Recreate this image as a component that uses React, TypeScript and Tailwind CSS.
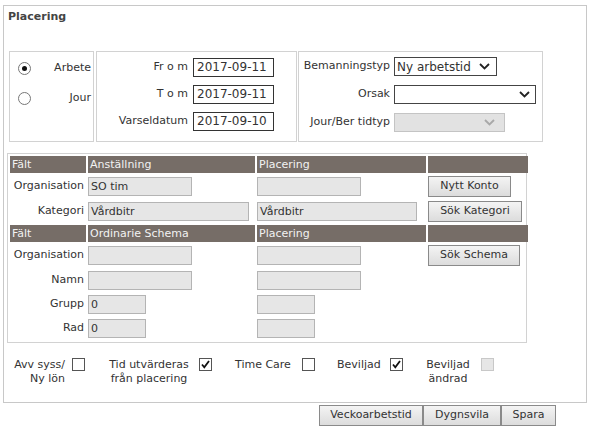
import React from "react";

const Chevron = ({ color = "#222" }: { color?: string }) => (
  <svg width="11" height="7" viewBox="0 0 11 7" fill="none">
    <path d="M1 1l4.5 4.5L10 1" stroke={color} strokeWidth="1.8" />
  </svg>
);

const Check = () => (
  <svg width="9" height="9" viewBox="0 0 9 9" fill="none">
    <path d="M1 4.5l2.3 2.8L8 1" stroke="#111" strokeWidth="1.8" />
  </svg>
);

const Radio = ({ on }: { on?: boolean }) => (
  <span className="w-[13px] h-[13px] rounded-full border border-[#777] bg-white flex items-center justify-center">
    {on && <span className="w-[5px] h-[5px] rounded-full bg-[#111]" />}
  </span>
);

const Box = ({ checked, disabled }: { checked?: boolean; disabled?: boolean }) => (
  <span
    className={
      "w-[13px] h-[13px] border flex items-center justify-center " +
      (disabled ? "border-[#c8c8c8] bg-[#e6e6e6]" : "border-[#555] bg-white")
    }
  >
    {checked && <Check />}
  </span>
);

const Field = ({ w, value = "" }: { w: string; value?: string }) => (
  <div className={"h-[19px] bg-[#e6e6e6] border border-[#b4b4b4] pl-[2px] leading-[17px] " + w}>{value}</div>
);

const DateField = ({ value }: { value: string }) => (
  <div className="w-[81px] h-[19px] border border-[#333] bg-white pl-[3px] leading-[17px] text-[12px]">{value}</div>
);

const Btn = ({ label, w }: { label: string; w: string }) => (
  <div className={"h-[21px] border border-[#8a8a8a] bg-gradient-to-b from-[#f4f4f4] to-[#dcdcdc] flex items-center justify-center " + w}>
    {label}
  </div>
);

const Header = ({ a, b }: { a: string; b: string }) => (
  <>
    <div className="h-[17px] bg-[#766d67] text-[#f2f2f2] pl-[2px] leading-[17px]">Fält</div>
    <div className="h-[17px] bg-[#766d67] text-[#f2f2f2] pl-[2px] leading-[17px]">{a}</div>
    <div className="h-[17px] bg-[#766d67] text-[#f2f2f2] pl-[2px] leading-[17px]">{b}</div>
    <div className="h-[17px] bg-[#766d67]" />
  </>
);

export default function App() {
  return (
    <div className="w-[591px] h-[435px] bg-white text-[11px] text-[#333] pt-[5px] pl-[3px]" style={{ fontFamily: '"DejaVu Sans", Verdana, sans-serif' }}>
      <div className="w-[584px] h-[398px] border border-[#c8c8c8] pl-[3px]">
        <div className="font-bold text-[#444] pt-[4px] pl-[1px] leading-[14px]">Placering</div>

        <div className="flex mt-[27px] ml-[2px]">
          <div className="w-[85px] h-[91px] border border-[#d2d2d2] flex flex-col pt-[9px] pl-[8px] pr-[2px] gap-[16px]">
            <div className="flex items-center justify-between h-[14px]">
              <Radio on />
              <span>Arbete</span>
            </div>
            <div className="flex items-center justify-between h-[14px]">
              <Radio />
              <span>Jour</span>
            </div>
          </div>
          <div className="w-[201px] h-[91px] border border-[#d2d2d2] ml-[2px] flex flex-col items-end pr-[22px] pt-[6px] gap-[8px]">
            <div className="flex items-center gap-[5px]"><span>Fr o m</span><DateField value="2017-09-11" /></div>
            <div className="flex items-center gap-[5px]"><span>T o m</span><DateField value="2017-09-11" /></div>
            <div className="flex items-center gap-[5px]"><span>Varseldatum</span><DateField value="2017-09-10" /></div>
          </div>
          <div className="w-[245px] h-[91px] border border-[#d2d2d2] ml-[1px] grid grid-cols-[91px_auto] content-start gap-y-[9px] pt-[5px] pl-[4px] items-center">
            <span className="text-right pr-[4px]">Bemanningstyp</span>
            <div className="w-[103px] h-[19px] border border-[#444] bg-white flex items-center justify-between pl-[2px] pr-[6px] text-[12px]">
              Ny arbetstid <Chevron />
            </div>
            <span className="text-right pr-[4px]">Orsak</span>
            <div className="w-[142px] h-[19px] border border-[#444] bg-white flex items-center justify-end pr-[5px]">
              <Chevron />
            </div>
            <span className="text-right pr-[4px]">Jour/Ber tidtyp</span>
            <div className="w-[111px] h-[19px] border border-[#c4c4c4] bg-[#e2e2e2] flex items-center justify-end pr-[9px]">
              <Chevron color="#a8a8a8" />
            </div>
          </div>
        </div>

        <div className="w-[520px] h-[190px] border border-[#d2d2d2] mt-[11px] pt-[2px] pl-[2px]">
          <div className="grid grid-cols-[76px_167px_169px_100px] gap-x-[2px] items-center">
            <Header a="Anställning" b="Placering" />

            <div className="h-[26px] flex items-center justify-end pr-[2px]">Organisation</div>
            <Field w="w-[104px]" value="SO tim" />
            <Field w="w-[104px]" />
            <Btn label="Nytt Konto" w="w-[83px]" />

            <div className="h-[25px] flex items-center justify-end pr-[2px]">Kategori</div>
            <Field w="w-[161px]" value="Vårdbitr" />
            <Field w="w-[160px]" value="Vårdbitr" />
            <Btn label="Sök Kategori" w="w-[94px]" />
          </div>
          <div className="grid grid-cols-[76px_167px_169px_100px] gap-x-[2px] items-center mt-[1px]">
            <Header a="Ordinarie Schema" b="Placering" />

            <div className="h-[26px] flex items-center justify-end pr-[2px]">Organisation</div>
            <Field w="w-[104px]" />
            <Field w="w-[104px]" />
            <Btn label="Sök Schema" w="w-[92px]" />

            <div className="h-[24px] flex items-center justify-end pr-[2px]">Namn</div>
            <Field w="w-[104px]" />
            <Field w="w-[104px]" />
            <div />

            <div className="h-[24px] flex items-center justify-end pr-[2px]">Grupp</div>
            <Field w="w-[58px]" value="0" />
            <Field w="w-[58px]" />
            <div />

            <div className="h-[24px] flex items-center justify-end pr-[2px]">Rad</div>
            <Field w="w-[58px]" value="0" />
            <Field w="w-[58px]" />
            <div />
          </div>
        </div>

        <div className="flex items-start mt-[15px] ml-[3px] leading-[14px]">
          <span className="w-[55px] whitespace-nowrap flex flex-col items-end">
            <span>Avv syss/</span>
            <span>Ny lön</span>
          </span>
          <span className="ml-[7px]"><Box /></span>
          <span className="text-center ml-[16px] w-[96px] whitespace-nowrap">Tid utvärderas<br />från placering</span>
          <span className="ml-[2px]"><Box checked /></span>
          <span className="ml-[23px] w-[58px] whitespace-nowrap">Time Care</span>
          <span className="ml-[9px]"><Box /></span>
          <span className="ml-[22px] w-[45px] whitespace-nowrap">Beviljad</span>
          <span className="ml-[8px]"><Box checked /></span>
          <span className="text-center ml-[14px] w-[62px] whitespace-nowrap">Beviljad<br />ändrad</span>
          <span className="ml-[2px]"><Box disabled /></span>
        </div>
      </div>
      <div className="flex ml-[316px] mt-[2px]">
        <Btn label="Veckoarbetstid" w="w-[104px]" />
        <Btn label="Dygnsvila" w="w-[78px]" />
        <Btn label="Spara" w="w-[55px]" />
      </div>
    </div>
  );
}
